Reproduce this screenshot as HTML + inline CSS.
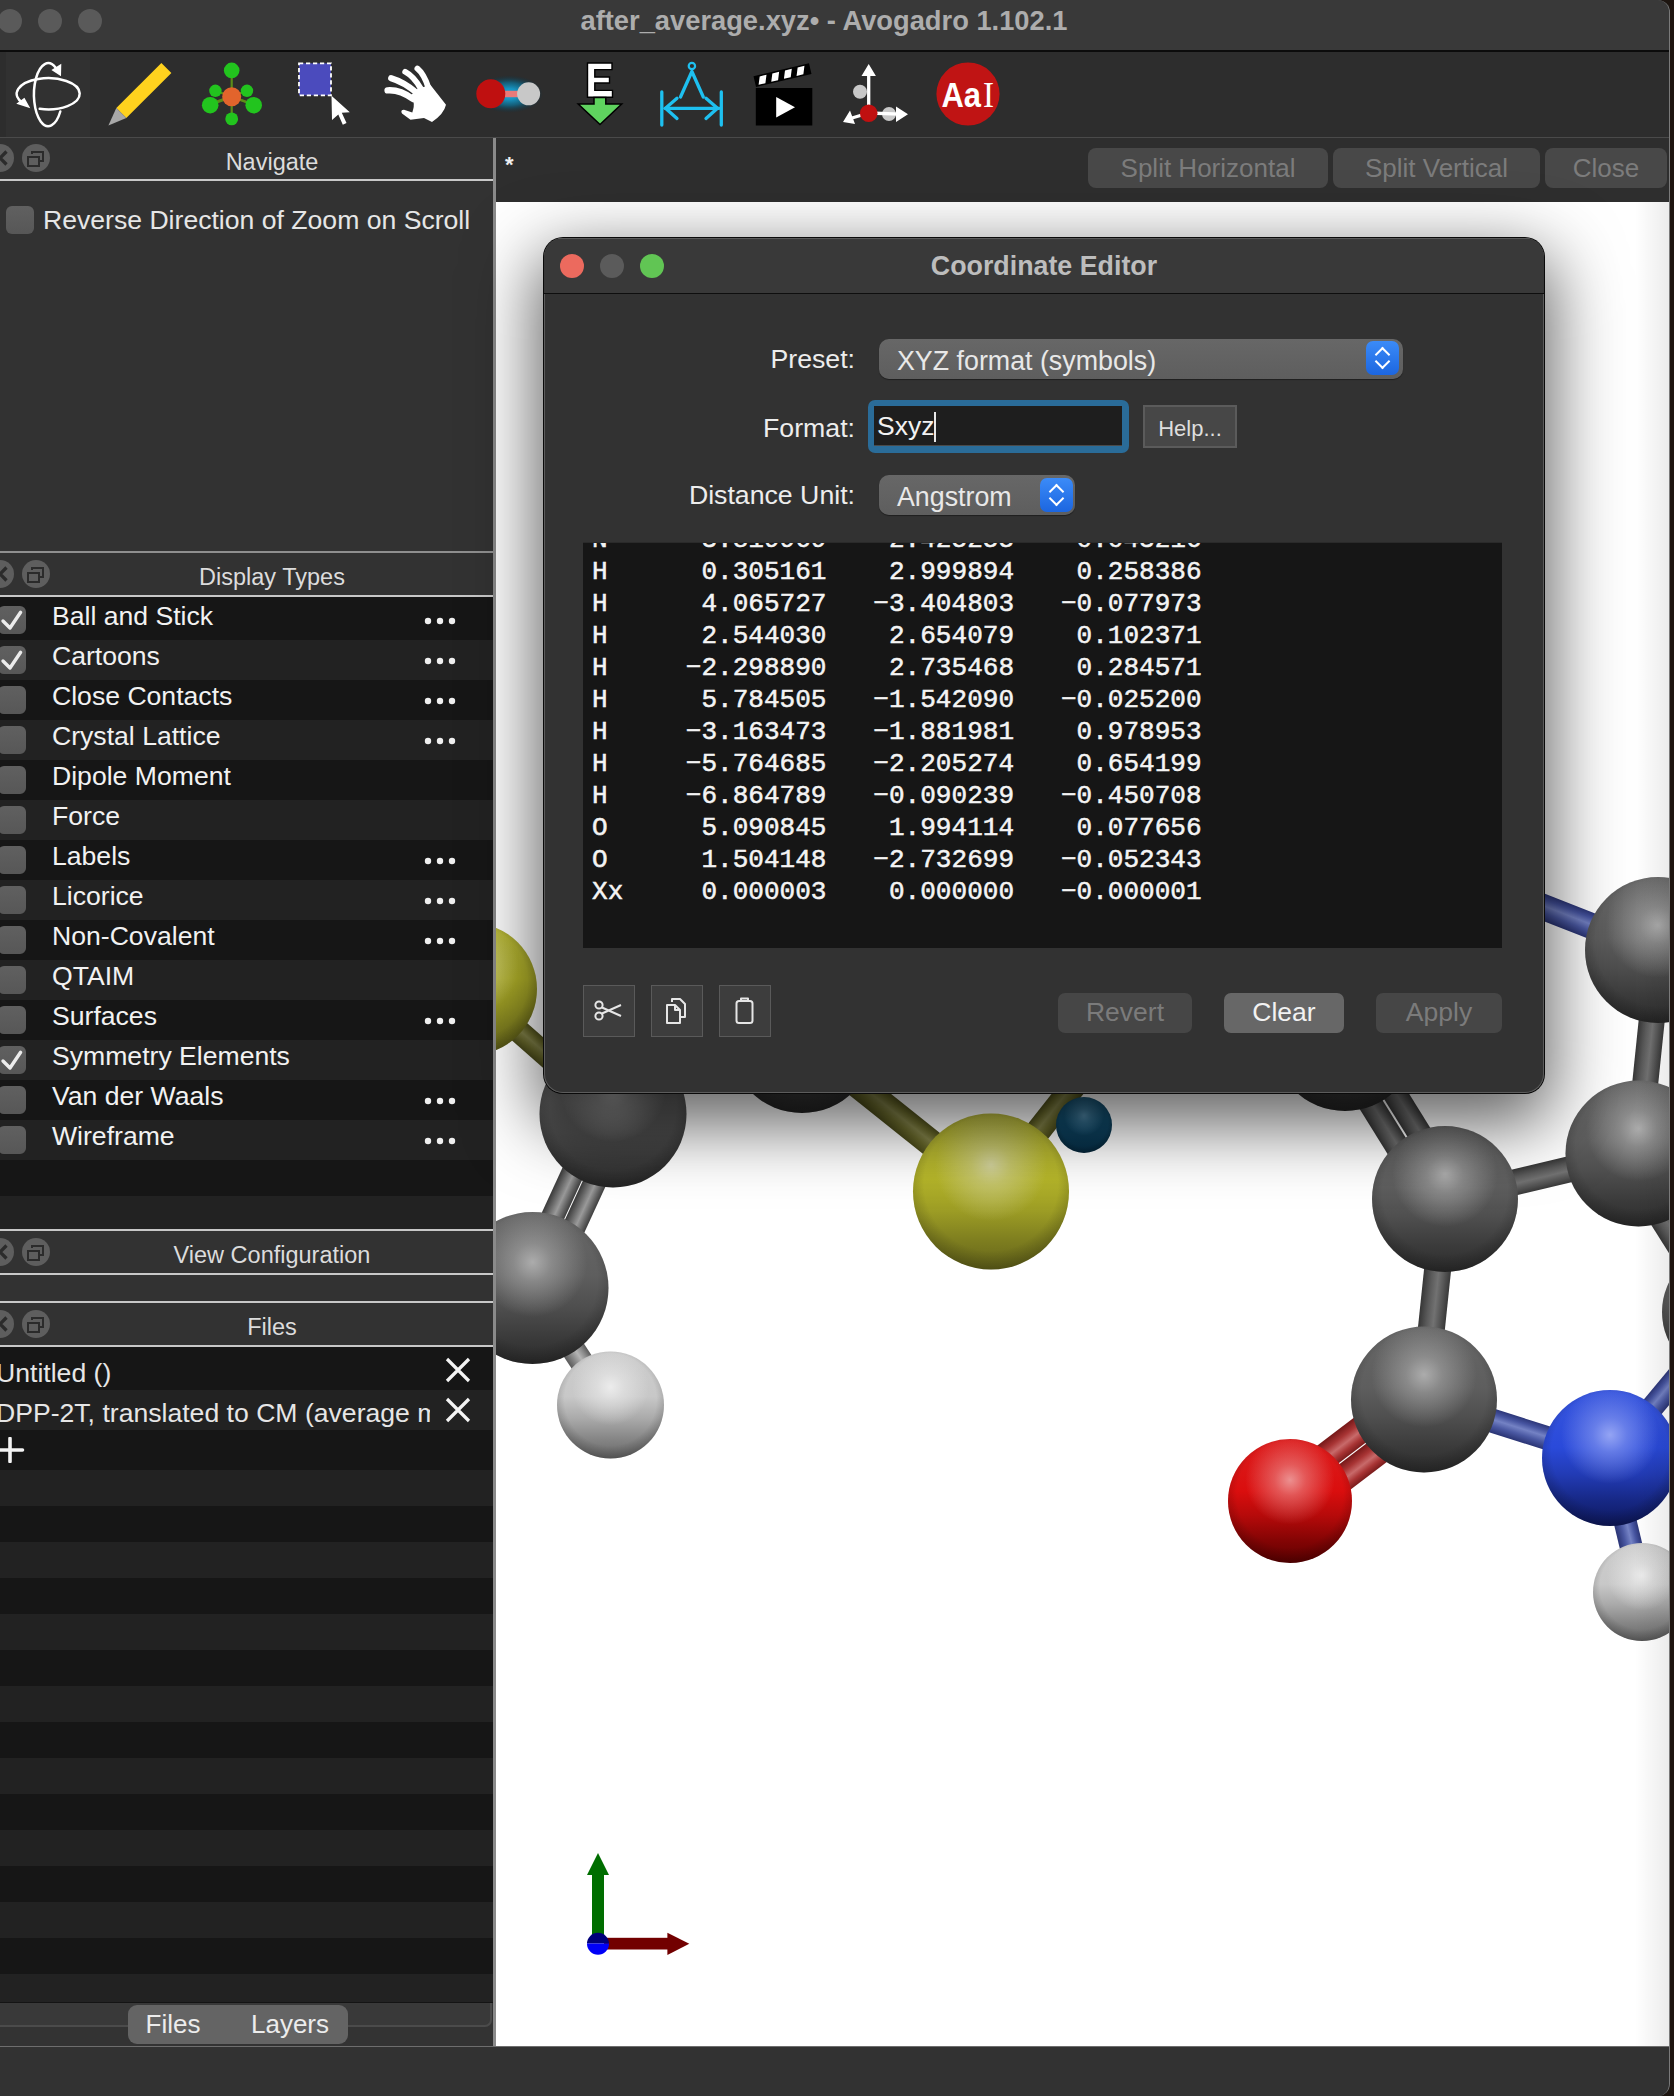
<!DOCTYPE html>
<html><head><meta charset="utf-8">
<style>
*{margin:0;padding:0;box-sizing:border-box}
html,body{width:1674px;height:2096px;overflow:hidden;background:#1d1510;font-family:"Liberation Sans",sans-serif}
.a{position:absolute}
#win{position:absolute;left:0;top:0;width:1670px;height:2096px;background:#303030;overflow:hidden;border-top-right-radius:12px;border-bottom-right-radius:12px}
#title{left:0;top:0;width:1670px;height:50px;background:#393939}
#titletxt{left:0;top:5px;width:1648px;height:32px;line-height:32px;text-align:center;color:#adadad;font-weight:bold;font-size:27.3px}
.tl{width:24px;height:24px;border-radius:50%;background:#5a5a5a;top:9px}
#tbline{left:0;top:50px;width:1670px;height:2px;background:#0c0c0c}
#toolbar{left:0;top:52px;width:1670px;height:85px;background:#2d2d2d}
#tbbot{left:0;top:137px;width:1670px;height:1px;background:#4a4a4a}
#dock{left:0;top:138px;width:493px;height:1908px;background:#323232}
#dockline{left:493px;top:138px;width:3px;height:1908px;background:#8a8a8a}
.hdr{left:50px;width:444px;height:44px;color:#dcdcdc;font-size:23.5px;text-align:center;line-height:48px}
.hline{left:0;width:493px;height:2px;background:#c8c8c8}
.circ{width:28px;height:28px;border-radius:50%;background:#5e5e5e}
.cb{width:28px;height:28px;border-radius:6px;background:linear-gradient(#606060,#575757)}
.row{left:0;width:493px;height:40px}
.rd{background:#161616}.rl{background:#222222}
.rtxt{left:52px;color:#f2f2f2;font-size:26.6px;line-height:40px;white-space:nowrap}
.dots{left:424px;color:#f2f2f2;font-size:26px;line-height:40px}
#tabarea{left:496px;top:138px;width:1174px;height:64px;background:#2e2e2e}
.sbtn{height:40px;top:148px;border-radius:8px;background:#484848;color:#7c7c7c;font-size:26px;text-align:center;line-height:40px}
#view{left:496px;top:202px;width:1174px;height:1844px;background:#ffffff;overflow:hidden}
#status{left:0;top:2046px;width:1670px;height:50px;background:#323232;border-top:1px solid #6e6e6e}

#dlg{left:544px;top:238px;width:1000px;height:855px;border-radius:19px;background:#323232;overflow:hidden;border:none;box-shadow:0 0 0 1px #0a0a0a, inset 0 0 0 1px #5c5c5c, 0 24px 70px 8px rgba(0,0,0,0.62)}
.lbl{left:0;width:311px;text-align:right;color:#ededed;font-size:26.7px;line-height:32px}
.combo{border-radius:10px;background:linear-gradient(#676767,#5e5e5e);box-shadow:0 1px 1px rgba(0,0,0,0.4)}
.combo span{position:absolute;left:18px;top:5.5px;color:#e8e8e8;font-size:26.8px;line-height:32px;white-space:nowrap}
.step{width:33px;height:34px;border-radius:7px;background:linear-gradient(#3b8bf8,#1c66e0)}
.step::before{content:"";position:absolute;left:10px;top:9px;width:9px;height:9px;border-left:2.6px solid #fff;border-top:2.6px solid #fff;transform:rotate(45deg);box-sizing:border-box;width:11px;height:11px;left:11px;top:8px}
.step::after{content:"";position:absolute;border-right:2.6px solid #fff;border-bottom:2.6px solid #fff;transform:rotate(45deg);box-sizing:border-box;width:11px;height:11px;left:11px;top:15px}
.ib{width:52px;height:52px;background:#3d3d3d;border:1.5px solid #5a5a5a}
.ib svg{position:absolute;left:0;top:0}
.pb{top:756px;height:40px;border-radius:7px;background:#474747;color:#f0f0f0;font-size:26.5px;line-height:39px;text-align:center}
.pb.dis{color:#7b7b7b;background:#464646}

</style></head><body>
<div id="win">
 <div id="title" class="a"></div>
 <div id="titletxt" class="a">after_average.xyz&#8226; - Avogadro 1.102.1</div>
 <div class="a tl" style="left:-2px"></div>
 <div class="a tl" style="left:38px"></div>
 <div class="a tl" style="left:78px"></div>
 <div id="tbline" class="a"></div>
 <div id="toolbar" class="a"></div>
 <div id="tbbot" class="a"></div>
 <!--TB--><svg class="a" style="left:0;top:52px" width="1100" height="85" viewBox="0 52 1100 85">
<rect x="6" y="52" width="84" height="85" fill="#313131"/>
<!-- navigate/rotate -->
<g fill="none" stroke="#ffffff" stroke-width="2.5" stroke-linecap="round">
 <path d="M39.7 108.8 A31.5 15.6 0 1 0 22.5 102.8"/>
 <path d="M55.5 67.5 A14.3 31.5 0 1 0 60.3 111.5"/>
</g>
<path d="M61.3 63.8 L61 76.2 L51.4 70 Z M16.3 103.8 L24.4 97.8 L30.3 108.3 Z" fill="#ffffff"/>
<!-- pencil -->
<path d="M161.4 62.9 L171.4 72.9 L126.3 118 L116.3 108 Z" fill="#ffd21e"/>
<path d="M116.3 108 L126.3 118 L108.4 125.6 Z" fill="#a8a8a8"/>
<!-- manipulate atoms -->
<g stroke="#5c8c18" stroke-width="2.2">
 <line x1="231.7" y1="70" x2="231.7" y2="119"/>
 <line x1="215.4" y1="90.8" x2="247" y2="102"/>
 <line x1="247" y1="90.8" x2="215.4" y2="102"/>
 <line x1="210" y1="105" x2="232" y2="97"/>
 <line x1="254" y1="105" x2="232" y2="97"/>
</g>
<g fill="#22c41e">
 <circle cx="231.7" cy="70.4" r="7.8"/><circle cx="215.4" cy="90.8" r="6.2"/><circle cx="247" cy="90.8" r="6.2"/>
 <circle cx="210.2" cy="105.2" r="8.3"/><circle cx="253.7" cy="105.2" r="8.3"/><circle cx="231.7" cy="118.9" r="6.4"/>
</g>
<circle cx="231.7" cy="96.8" r="9.5" fill="#e2642c"/>
<!-- select -->
<rect x="299" y="63.3" width="32" height="32" fill="#4b4bbd" stroke="#ffffff" stroke-width="1.8" stroke-dasharray="4.2 2.8"/>
<path d="M331.5 95.8 L349.8 112.3 L341.8 112.8 L346.5 123 L342.8 124.8 L338.3 114.6 L332 120 Z" fill="#ffffff"/>
<!-- hand -->
<g fill="none" stroke="#ffffff" stroke-linecap="round">
 <path d="M387.6 90.4 Q400 89.5 413 99" stroke-width="6.4"/>
 <path d="M391.2 78.2 Q404 82 417 93" stroke-width="6.2"/>
 <path d="M405.2 71.8 Q414 76.5 421 89" stroke-width="5.8"/>
 <path d="M417.4 68.6 Q424 74 428.5 88" stroke-width="5.8"/>
</g>
<path d="M410 96 L418 88.5 L430.5 85 L446 104.8 Q444 114 432 122 L424 118 L410.5 119.8 L402 113.5 Q400 110 404 109.8 L412.3 112.4 Q414.5 106 413.5 102 Z" fill="#ffffff"/>
<!-- bond centric -->
<defs><radialGradient id="glow" cx="0.5" cy="0.5" r="0.5"><stop offset="0" stop-color="#1ab0e6"/><stop offset="0.3" stop-color="#1790bc"/><stop offset="0.6" stop-color="#126482" stop-opacity="0.9"/><stop offset="1" stop-color="#0c3040" stop-opacity="0"/></radialGradient></defs>
<ellipse cx="509" cy="94" rx="34" ry="19" fill="url(#glow)"/>
<rect x="500" y="90.8" width="22" height="6.4" fill="#e87a7a"/>
<circle cx="490.8" cy="93.8" r="14.5" fill="#bf1010"/>
<circle cx="528.6" cy="93.8" r="11.5" fill="#c8c8c8"/>
<!-- optimize E -->
<path d="M587.5 63 H612 V69.6 H594.8 V77 H609.5 V83 H594.8 V90.4 H612.5 V97.2 H587.5 Z" fill="#ffffff" stroke="#000000" stroke-width="1.4"/>
<path d="M594 97.5 H605.8 V104 H621.7 L600 124.5 L578.2 104 H594 Z" fill="#5fd35f" stroke="#000000" stroke-width="1.5"/>
<!-- measure -->
<g fill="none" stroke="#1ec0f0" stroke-width="3.3" stroke-linecap="round" stroke-linejoin="round">
 <line x1="661.8" y1="92" x2="661.8" y2="125"/><line x1="721.3" y1="92" x2="721.3" y2="125"/>
 <line x1="665" y1="108.3" x2="719" y2="108.3"/>
 <path d="M677 98.2 L665.5 108.3 L677 118.5"/><path d="M706 98.2 L717.5 108.3 L706 118.5"/>
 <path d="M680.5 97 L691.9 71.5 L703.3 97"/>
 <circle cx="691.9" cy="66" r="3.2" stroke-width="2.2"/>
</g>
<!-- clapperboard -->
<rect x="755.8" y="88" width="56.5" height="37.5" fill="#000000"/>
<path d="M776.2 97 L776.2 117.6 L795 107.3 Z" fill="#ffffff"/>
<g transform="translate(753.5 76.3) rotate(-13.3)">
 <rect x="0" y="0" width="57" height="11" fill="#000000"/>
 <path d="M6 1.5 H13 L10 9.5 H3 Z M19 1.5 H26 L23 9.5 H16 Z M32 1.5 H39 L36 9.5 H29 Z M45 1.5 H52 L49 9.5 H42 Z" fill="#ffffff"/>
</g>
<!-- axes / align -->
<circle cx="860" cy="91.8" r="7" fill="#c8c8c8"/>
<circle cx="889" cy="114" r="7" fill="#c8c8c8"/>
<g stroke="#ffffff" stroke-width="3.3" fill="#ffffff">
 <line x1="868.7" y1="113" x2="868.7" y2="72"/>
 <line x1="868.7" y1="113" x2="852" y2="118"/>
 <line x1="868.7" y1="113" x2="900" y2="114.2"/>
</g>
<path d="M861.5 76 L868.7 64 L875.9 76 Z M843 122 L850 110.5 L855 124 Z M896 106.5 L908 114.3 L896 122 Z" fill="#ffffff"/>
<circle cx="868.7" cy="113.3" r="8.8" fill="#c01010"/>
<!-- AaI -->
<circle cx="968" cy="94" r="31.6" fill="#c01414"/>
<text x="941.5" y="107" font-family="Liberation Sans" font-weight="bold" font-size="35.5" fill="#ffffff" textLength="39.5" lengthAdjust="spacingAndGlyphs">Aa</text>
<text x="983" y="107" font-family="Liberation Serif" font-size="36" fill="#ffffff" textLength="11" lengthAdjust="spacingAndGlyphs">I</text>
</svg><!--/TB-->

 <div id="dock" class="a"></div>

 <!-- Navigate -->
 <div class="a circ" style="left:-14px;top:144px"></div>
 <div class="a circ" style="left:22px;top:144px"></div>
 <svg class="a" style="left:-14px;top:144px" width="64" height="28" viewBox="0 0 64 28"><path d="M20.5 7.5L14 14L20.5 20.5" fill="none" stroke="#2b2b2b" stroke-width="3.3"/><rect x="42" y="13" width="11" height="9" fill="none" stroke="#2b2b2b" stroke-width="2"/><path d="M46 10V8H57V17H53" fill="none" stroke="#2b2b2b" stroke-width="2"/></svg>
 <div class="a hdr" style="top:138px">Navigate</div>
 <div class="a hline" style="top:179px"></div>
 <div class="a cb" style="left:6px;top:206px"></div>
 <div class="a rtxt" style="left:43px;top:200px;color:#e6e6e6">Reverse Direction of Zoom on Scroll</div>
 <!-- Display Types -->
 <div class="a" style="left:0;top:551px;width:493px;height:2px;background:#8f8f8f"></div>
 <div class="a circ" style="left:-14px;top:560px"></div>
 <div class="a circ" style="left:22px;top:560px"></div>
 <svg class="a" style="left:-14px;top:560px" width="64" height="28" viewBox="0 0 64 28"><path d="M20.5 7.5L14 14L20.5 20.5" fill="none" stroke="#2b2b2b" stroke-width="3.3"/><rect x="42" y="13" width="11" height="9" fill="none" stroke="#2b2b2b" stroke-width="2"/><path d="M46 10V8H57V17H53" fill="none" stroke="#2b2b2b" stroke-width="2"/></svg>
 <div class="a hdr" style="top:553px">Display Types</div>
 <div class="a hline" style="top:595px"></div>
 <div class="a" style="left:0;top:597px;width:493px;height:2px;background:#0c0c0c"></div>
 <div class="a row rd" style="top:597px;height:43px"></div>
 <div class="a cb" style="left:-2px;top:606px"></div>
 <svg class="a" style="left:0;top:606px" width="26" height="26" viewBox="0 0 26 26"><path d="M3 15 L10 22 L20.6 6.3" fill="none" stroke="#ececec" stroke-width="3.4" stroke-linecap="round" stroke-linejoin="round"/></svg>
 <div class="a rtxt" style="top:596px">Ball and Stick</div>
 <svg class="a" style="left:423px;top:616px" width="34" height="10"><circle cx="5" cy="5" r="3.2" fill="#f0f0f0"/><circle cx="17" cy="5" r="3.2" fill="#f0f0f0"/><circle cx="29" cy="5" r="3.2" fill="#f0f0f0"/></svg>
 <div class="a row rl" style="top:640px;height:40px"></div>
 <div class="a cb" style="left:-2px;top:646px"></div>
 <svg class="a" style="left:0;top:646px" width="26" height="26" viewBox="0 0 26 26"><path d="M3 15 L10 22 L20.6 6.3" fill="none" stroke="#ececec" stroke-width="3.4" stroke-linecap="round" stroke-linejoin="round"/></svg>
 <div class="a rtxt" style="top:636px">Cartoons</div>
 <svg class="a" style="left:423px;top:656px" width="34" height="10"><circle cx="5" cy="5" r="3.2" fill="#f0f0f0"/><circle cx="17" cy="5" r="3.2" fill="#f0f0f0"/><circle cx="29" cy="5" r="3.2" fill="#f0f0f0"/></svg>
 <div class="a row rd" style="top:680px;height:40px"></div>
 <div class="a cb" style="left:-2px;top:686px"></div>
 <div class="a rtxt" style="top:676px">Close Contacts</div>
 <svg class="a" style="left:423px;top:696px" width="34" height="10"><circle cx="5" cy="5" r="3.2" fill="#f0f0f0"/><circle cx="17" cy="5" r="3.2" fill="#f0f0f0"/><circle cx="29" cy="5" r="3.2" fill="#f0f0f0"/></svg>
 <div class="a row rl" style="top:720px;height:40px"></div>
 <div class="a cb" style="left:-2px;top:726px"></div>
 <div class="a rtxt" style="top:716px">Crystal Lattice</div>
 <svg class="a" style="left:423px;top:736px" width="34" height="10"><circle cx="5" cy="5" r="3.2" fill="#f0f0f0"/><circle cx="17" cy="5" r="3.2" fill="#f0f0f0"/><circle cx="29" cy="5" r="3.2" fill="#f0f0f0"/></svg>
 <div class="a row rd" style="top:760px;height:40px"></div>
 <div class="a cb" style="left:-2px;top:766px"></div>
 <div class="a rtxt" style="top:756px">Dipole Moment</div>
 <div class="a row rl" style="top:800px;height:40px"></div>
 <div class="a cb" style="left:-2px;top:806px"></div>
 <div class="a rtxt" style="top:796px">Force</div>
 <div class="a row rd" style="top:840px;height:40px"></div>
 <div class="a cb" style="left:-2px;top:846px"></div>
 <div class="a rtxt" style="top:836px">Labels</div>
 <svg class="a" style="left:423px;top:856px" width="34" height="10"><circle cx="5" cy="5" r="3.2" fill="#f0f0f0"/><circle cx="17" cy="5" r="3.2" fill="#f0f0f0"/><circle cx="29" cy="5" r="3.2" fill="#f0f0f0"/></svg>
 <div class="a row rl" style="top:880px;height:40px"></div>
 <div class="a cb" style="left:-2px;top:886px"></div>
 <div class="a rtxt" style="top:876px">Licorice</div>
 <svg class="a" style="left:423px;top:896px" width="34" height="10"><circle cx="5" cy="5" r="3.2" fill="#f0f0f0"/><circle cx="17" cy="5" r="3.2" fill="#f0f0f0"/><circle cx="29" cy="5" r="3.2" fill="#f0f0f0"/></svg>
 <div class="a row rd" style="top:920px;height:40px"></div>
 <div class="a cb" style="left:-2px;top:926px"></div>
 <div class="a rtxt" style="top:916px">Non-Covalent</div>
 <svg class="a" style="left:423px;top:936px" width="34" height="10"><circle cx="5" cy="5" r="3.2" fill="#f0f0f0"/><circle cx="17" cy="5" r="3.2" fill="#f0f0f0"/><circle cx="29" cy="5" r="3.2" fill="#f0f0f0"/></svg>
 <div class="a row rl" style="top:960px;height:40px"></div>
 <div class="a cb" style="left:-2px;top:966px"></div>
 <div class="a rtxt" style="top:956px">QTAIM</div>
 <div class="a row rd" style="top:1000px;height:40px"></div>
 <div class="a cb" style="left:-2px;top:1006px"></div>
 <div class="a rtxt" style="top:996px">Surfaces</div>
 <svg class="a" style="left:423px;top:1016px" width="34" height="10"><circle cx="5" cy="5" r="3.2" fill="#f0f0f0"/><circle cx="17" cy="5" r="3.2" fill="#f0f0f0"/><circle cx="29" cy="5" r="3.2" fill="#f0f0f0"/></svg>
 <div class="a row rl" style="top:1040px;height:40px"></div>
 <div class="a cb" style="left:-2px;top:1046px"></div>
 <svg class="a" style="left:0;top:1046px" width="26" height="26" viewBox="0 0 26 26"><path d="M3 15 L10 22 L20.6 6.3" fill="none" stroke="#ececec" stroke-width="3.4" stroke-linecap="round" stroke-linejoin="round"/></svg>
 <div class="a rtxt" style="top:1036px">Symmetry Elements</div>
 <div class="a row rd" style="top:1080px;height:40px"></div>
 <div class="a cb" style="left:-2px;top:1086px"></div>
 <div class="a rtxt" style="top:1076px">Van der Waals</div>
 <svg class="a" style="left:423px;top:1096px" width="34" height="10"><circle cx="5" cy="5" r="3.2" fill="#f0f0f0"/><circle cx="17" cy="5" r="3.2" fill="#f0f0f0"/><circle cx="29" cy="5" r="3.2" fill="#f0f0f0"/></svg>
 <div class="a row rl" style="top:1120px;height:40px"></div>
 <div class="a cb" style="left:-2px;top:1126px"></div>
 <div class="a rtxt" style="top:1116px">Wireframe</div>
 <svg class="a" style="left:423px;top:1136px" width="34" height="10"><circle cx="5" cy="5" r="3.2" fill="#f0f0f0"/><circle cx="17" cy="5" r="3.2" fill="#f0f0f0"/><circle cx="29" cy="5" r="3.2" fill="#f0f0f0"/></svg>
 <div class="a row rd" style="top:1160px;height:36px"></div>
 <div class="a row rl" style="top:1196px;height:34px"></div>

 <!-- View Configuration -->
 <div class="a hline" style="top:1229px"></div>
 <div class="a circ" style="left:-14px;top:1238px"></div>
 <div class="a circ" style="left:22px;top:1238px"></div>
 <svg class="a" style="left:-14px;top:1238px" width="64" height="28" viewBox="0 0 64 28"><path d="M20.5 7.5L14 14L20.5 20.5" fill="none" stroke="#2b2b2b" stroke-width="3.3"/><rect x="42" y="13" width="11" height="9" fill="none" stroke="#2b2b2b" stroke-width="2"/><path d="M46 10V8H57V17H53" fill="none" stroke="#2b2b2b" stroke-width="2"/></svg>
 <div class="a hdr" style="top:1231px">View Configuration</div>
 <div class="a hline" style="top:1273px"></div>
 <div class="a hline" style="top:1301px"></div>
 <div class="a circ" style="left:-14px;top:1310px"></div>
 <div class="a circ" style="left:22px;top:1310px"></div>
 <svg class="a" style="left:-14px;top:1310px" width="64" height="28" viewBox="0 0 64 28"><path d="M20.5 7.5L14 14L20.5 20.5" fill="none" stroke="#2b2b2b" stroke-width="3.3"/><rect x="42" y="13" width="11" height="9" fill="none" stroke="#2b2b2b" stroke-width="2"/><path d="M46 10V8H57V17H53" fill="none" stroke="#2b2b2b" stroke-width="2"/></svg>
 <div class="a hdr" style="top:1303px">Files</div>
 <div class="a hline" style="top:1345px"></div>
 <div class="a row rd" style="top:1347px;height:43px"></div>
 <div class="a rtxt" style="left:-4px;top:1353px;color:#e6e6e6">Untitled ()</div>
 <div class="a row rl" style="top:1390px;height:40px"></div>
 <div class="a rtxt" style="left:-4px;top:1393px;color:#e6e6e6;width:434px;overflow:hidden">DPP-2T, translated to CM (average m</div>
 <div class="a row rd" style="top:1430px;height:40px"></div>
 <div class="a row rl" style="top:1470px;height:36px"></div>
 <div class="a row rd" style="top:1506px;height:36px"></div>
 <div class="a row rl" style="top:1542px;height:36px"></div>
 <div class="a row rd" style="top:1578px;height:36px"></div>
 <div class="a row rl" style="top:1614px;height:36px"></div>
 <div class="a row rd" style="top:1650px;height:36px"></div>
 <div class="a row rl" style="top:1686px;height:36px"></div>
 <div class="a row rd" style="top:1722px;height:36px"></div>
 <div class="a row rl" style="top:1758px;height:36px"></div>
 <div class="a row rd" style="top:1794px;height:36px"></div>
 <div class="a row rl" style="top:1830px;height:36px"></div>
 <div class="a row rd" style="top:1866px;height:36px"></div>
 <div class="a row rl" style="top:1902px;height:36px"></div>
 <div class="a row rd" style="top:1938px;height:36px"></div>
 <div class="a row rl" style="top:1974px;height:29px"></div>

 <svg class="a" style="left:444px;top:1356px" width="28" height="28"><path d="M3 3L25 25M25 3L3 25" stroke="#f4f4f4" stroke-width="3.2"/></svg>
 <svg class="a" style="left:444px;top:1396px" width="28" height="28"><path d="M3 3L25 25M25 3L3 25" stroke="#f4f4f4" stroke-width="3.2"/></svg>
 <svg class="a" style="left:0;top:1437px" width="26" height="26"><path d="M10 1.5V24.5M-2 13H22.5" stroke="#f4f4f4" stroke-width="3.6" stroke-linecap="round"/></svg>
 <!-- bottom tabs -->
 <div class="a" style="left:0;top:2003px;width:493px;height:43px;background:#333333"></div>
 <div class="a" style="left:-10px;top:2003px;width:502px;height:24px;background:#393939;border-right:2px solid #4b4b4b;border-bottom:2px solid #4b4b4b;border-bottom-right-radius:7px"></div>
 <div class="a" style="left:0;top:2002px;width:493px;height:1px;background:#141414"></div>
 <div class="a" style="left:128px;top:2005px;width:220px;height:39px;border-radius:9px;background:#646464"></div>
 <div class="a" style="left:128px;top:2005px;width:90px;line-height:39px;text-align:center;color:#ececec;font-size:26px">Files</div>
 <div class="a" style="left:238px;top:2005px;width:104px;line-height:39px;text-align:center;color:#ececec;font-size:26px">Layers</div>
 <div id="dockline" class="a"></div>

 <div id="tabarea" class="a"></div>

 <div class="a" style="left:505px;top:152px;color:#f0f0f0;font-size:22px;font-weight:bold">*</div>
 <div class="a sbtn" style="left:1088px;width:240px">Split Horizontal</div>
 <div class="a sbtn" style="left:1333px;width:207px">Split Vertical</div>
 <div class="a sbtn" style="left:1545px;width:122px">Close</div>
 <div id="view" class="a"></div>
 <!--MOL--><svg class="a" style="left:496px;top:202px" width="1174" height="1844" viewBox="496 202 1174 1844"><defs><linearGradient id="lC" x1="0" y1="0" x2="0" y2="1"><stop offset="0" stop-color="#676767"/><stop offset="0.42" stop-color="#5e5e5e"/><stop offset="0.62" stop-color="#4f4f4f"/><stop offset="0.82" stop-color="#3b3b3b"/><stop offset="1" stop-color="#2c2c2c"/></linearGradient><radialGradient id="hC" cx="0.5" cy="0.33" r="0.36"><stop offset="0" stop-color="#acacac" stop-opacity="1"/><stop offset="0.35" stop-color="#acacac" stop-opacity="0.55"/><stop offset="1" stop-color="#acacac" stop-opacity="0"/></radialGradient><linearGradient id="lCd" x1="0" y1="0" x2="0" y2="1"><stop offset="0" stop-color="#676767"/><stop offset="0.42" stop-color="#5e5e5e"/><stop offset="0.62" stop-color="#4f4f4f"/><stop offset="0.82" stop-color="#3b3b3b"/><stop offset="1" stop-color="#2c2c2c"/></linearGradient><radialGradient id="hCd" cx="0.5" cy="0.33" r="0.36"><stop offset="0" stop-color="#acacac" stop-opacity="1"/><stop offset="0.35" stop-color="#acacac" stop-opacity="0.55"/><stop offset="1" stop-color="#acacac" stop-opacity="0"/></radialGradient><linearGradient id="lH" x1="0" y1="0" x2="0" y2="1"><stop offset="0" stop-color="#cccccc"/><stop offset="0.42" stop-color="#c8c8c8"/><stop offset="0.62" stop-color="#ababab"/><stop offset="0.82" stop-color="#858585"/><stop offset="1" stop-color="#686868"/></linearGradient><radialGradient id="hH" cx="0.5" cy="0.33" r="0.36"><stop offset="0" stop-color="#ececec" stop-opacity="1"/><stop offset="0.35" stop-color="#ececec" stop-opacity="0.55"/><stop offset="1" stop-color="#ececec" stop-opacity="0"/></radialGradient><linearGradient id="lO" x1="0" y1="0" x2="0" y2="1"><stop offset="0" stop-color="#dc1e1e"/><stop offset="0.42" stop-color="#da0e0e"/><stop offset="0.62" stop-color="#b50a0a"/><stop offset="0.82" stop-color="#830404"/><stop offset="1" stop-color="#5e0000"/></linearGradient><radialGradient id="hO" cx="0.5" cy="0.33" r="0.36"><stop offset="0" stop-color="#ec9090" stop-opacity="1"/><stop offset="0.35" stop-color="#ec9090" stop-opacity="0.55"/><stop offset="1" stop-color="#ec9090" stop-opacity="0"/></radialGradient><linearGradient id="lN" x1="0" y1="0" x2="0" y2="1"><stop offset="0" stop-color="#3755dd"/><stop offset="0.42" stop-color="#2a4ada"/><stop offset="0.62" stop-color="#223bb5"/><stop offset="0.82" stop-color="#162783"/><stop offset="1" stop-color="#0e185e"/></linearGradient><radialGradient id="hN" cx="0.5" cy="0.33" r="0.36"><stop offset="0" stop-color="#94a4f4" stop-opacity="1"/><stop offset="0.35" stop-color="#94a4f4" stop-opacity="0.55"/><stop offset="1" stop-color="#94a4f4" stop-opacity="0"/></radialGradient><linearGradient id="lS" x1="0" y1="0" x2="0" y2="1"><stop offset="0" stop-color="#b9b938"/><stop offset="0.42" stop-color="#b6b62a"/><stop offset="0.62" stop-color="#9d9d25"/><stop offset="0.82" stop-color="#7d7d1f"/><stop offset="1" stop-color="#64641a"/></linearGradient><radialGradient id="hS" cx="0.5" cy="0.33" r="0.36"><stop offset="0" stop-color="#d2d29c" stop-opacity="1"/><stop offset="0.35" stop-color="#d2d29c" stop-opacity="0.55"/><stop offset="1" stop-color="#d2d29c" stop-opacity="0"/></radialGradient><linearGradient id="lX" x1="0" y1="0" x2="0" y2="1"><stop offset="0" stop-color="#185373"/><stop offset="0.42" stop-color="#104c6c"/><stop offset="0.62" stop-color="#0d4260"/><stop offset="0.82" stop-color="#093650"/><stop offset="1" stop-color="#062c44"/></linearGradient><radialGradient id="hX" cx="0.5" cy="0.33" r="0.36"><stop offset="0" stop-color="#5088a8" stop-opacity="1"/><stop offset="0.35" stop-color="#5088a8" stop-opacity="0.55"/><stop offset="1" stop-color="#5088a8" stop-opacity="0"/></radialGradient><radialGradient id="edge" cx="0.5" cy="0.45" r="0.55"><stop offset="0.78" stop-color="#000" stop-opacity="0"/><stop offset="1" stop-color="#000" stop-opacity="0.22"/></radialGradient><linearGradient id="bC" x1="0" y1="0" x2="0" y2="1"><stop offset="0" stop-color="#383838"/><stop offset="0.22" stop-color="#555555"/><stop offset="0.45" stop-color="#727272"/><stop offset="0.7" stop-color="#5a5a5a"/><stop offset="1" stop-color="#363636"/></linearGradient><linearGradient id="bS" x1="0" y1="0" x2="0" y2="1"><stop offset="0" stop-color="#4e4e1c"/><stop offset="0.22" stop-color="#6a6a2c"/><stop offset="0.45" stop-color="#84844a"/><stop offset="0.7" stop-color="#6a6a2c"/><stop offset="1" stop-color="#4a4a1a"/></linearGradient><linearGradient id="bB" x1="0" y1="0" x2="0" y2="1"><stop offset="0" stop-color="#2c3678"/><stop offset="0.22" stop-color="#4654a0"/><stop offset="0.45" stop-color="#7482c4"/><stop offset="0.7" stop-color="#4a58a2"/><stop offset="1" stop-color="#2a3474"/></linearGradient><linearGradient id="bR" x1="0" y1="0" x2="0" y2="1"><stop offset="0" stop-color="#7a1c1c"/><stop offset="0.22" stop-color="#a83434"/><stop offset="0.45" stop-color="#c86a6a"/><stop offset="0.7" stop-color="#a83434"/><stop offset="1" stop-color="#761818"/></linearGradient><linearGradient id="bH" x1="0" y1="0" x2="0" y2="1"><stop offset="0" stop-color="#5a5a5a"/><stop offset="0.22" stop-color="#8a8a8a"/><stop offset="0.45" stop-color="#b4b4b4"/><stop offset="0.7" stop-color="#8a8a8a"/><stop offset="1" stop-color="#5a5a5a"/></linearGradient><linearGradient id="bCL" x1="0" y1="0" x2="0" y2="1"><stop offset="0" stop-color="#3e3e3e"/><stop offset="0.22" stop-color="#6a6a6a"/><stop offset="0.45" stop-color="#9a9a9a"/><stop offset="0.7" stop-color="#6e6e6e"/><stop offset="1" stop-color="#3a3a3a"/></linearGradient></defs><rect x="0" y="-13.0" width="150.4" height="26" fill="url(#bB)" transform="translate(1500,890) rotate(21.45)"/>
<rect x="0" y="-13.0" width="204.1" height="26" fill="url(#bC)" transform="translate(1659,950) rotate(95.91)"/>
<rect x="0" y="-13.0" width="198.4" height="26" fill="url(#bC)" transform="translate(1638,1153) rotate(166.59)"/>
<rect x="0" y="-13.5" width="191.4" height="27" fill="url(#bC)" transform="translate(1620,1150) rotate(57.80)"/>
<rect x="0" y="-12.0" width="189.5" height="24" fill="url(#bC)" transform="translate(1356.0432020726798,1031.1408682778385) rotate(58.15)"/><rect x="0" y="-12.0" width="189.5" height="24" fill="url(#bC)" transform="translate(1333.9567979273202,1044.8591317221615) rotate(58.15)"/>
<rect x="0" y="-13.5" width="201.1" height="27" fill="url(#bC)" transform="translate(1445,1199) rotate(95.99)"/>
<rect x="0" y="-13.5" width="168.4" height="27" fill="url(#bR)" transform="translate(1432.4795946891988,1410.1398596897318) rotate(142.72)"/><rect x="0" y="-13.5" width="168.4" height="27" fill="url(#bR)" transform="translate(1415.5204053108012,1387.8601403102682) rotate(142.72)"/>
<rect x="0" y="-12.0" width="195.1" height="24" fill="url(#bB)" transform="translate(1424,1399) rotate(17.60)"/>
<rect x="0" y="-11.5" width="137.8" height="23" fill="url(#bB)" transform="translate(1610,1458) rotate(76.57)"/>
<rect x="0" y="-11.5" width="140.6" height="23" fill="url(#bB)" transform="translate(1610,1458) rotate(-50.19)"/>
<rect x="0" y="-13.5" width="241.9" height="27" fill="url(#bS)" transform="translate(802,1040) rotate(38.62)"/>
<rect x="0" y="-12.5" width="192.3" height="25" fill="url(#bS)" transform="translate(991,1191) rotate(-51.76)"/>
<rect x="0" y="-11.5" width="189.2" height="23" fill="url(#bS)" transform="translate(471,989) rotate(41.36)"/>
<rect x="0" y="-11.5" width="191.5" height="23" fill="url(#bCL)" transform="translate(623.9028368235801,1119.012798539577) rotate(114.69)"/><rect x="0" y="-11.5" width="191.5" height="23" fill="url(#bCL)" transform="translate(602.0971631764199,1108.987201460423) rotate(114.69)"/>
<rect x="0" y="-12.0" width="140.1" height="24" fill="url(#bH)" transform="translate(533,1288) rotate(56.65)"/>
<rect x="0" y="-11.0" width="143.4" height="22" fill="url(#bC)" transform="translate(613,1114) rotate(-52.65)"/>
<g><circle cx="1345" cy="1038" r="73" fill="url(#lCd)"/><circle cx="1345" cy="1038" r="73" fill="url(#hCd)"/><circle cx="1345" cy="1038" r="73" fill="url(#edge)"/></g>
<g><circle cx="802" cy="1040" r="73" fill="url(#lCd)"/><circle cx="802" cy="1040" r="73" fill="url(#hCd)"/><circle cx="802" cy="1040" r="73" fill="url(#edge)"/></g>
<g><circle cx="1658" cy="950" r="73" fill="url(#lC)"/><circle cx="1658" cy="950" r="73" fill="url(#hC)"/><circle cx="1658" cy="950" r="73" fill="url(#edge)"/></g>
<g><circle cx="1638.5" cy="1153.5" r="73" fill="url(#lC)"/><circle cx="1638.5" cy="1153.5" r="73" fill="url(#hC)"/><circle cx="1638.5" cy="1153.5" r="73" fill="url(#edge)"/></g>
<g><circle cx="1728" cy="1312" r="66" fill="url(#lC)"/><circle cx="1728" cy="1312" r="66" fill="url(#hC)"/><circle cx="1728" cy="1312" r="66" fill="url(#edge)"/></g>
<g><circle cx="1445" cy="1199" r="73" fill="url(#lC)"/><circle cx="1445" cy="1199" r="73" fill="url(#hC)"/><circle cx="1445" cy="1199" r="73" fill="url(#edge)"/></g>
<g><circle cx="1424" cy="1399.5" r="73" fill="url(#lC)"/><circle cx="1424" cy="1399.5" r="73" fill="url(#hC)"/><circle cx="1424" cy="1399.5" r="73" fill="url(#edge)"/></g>
<g><circle cx="1290" cy="1501" r="62" fill="url(#lO)"/><circle cx="1290" cy="1501" r="62" fill="url(#hO)"/><circle cx="1290" cy="1501" r="62" fill="url(#edge)"/></g>
<g><circle cx="1610" cy="1458" r="68" fill="url(#lN)"/><circle cx="1610" cy="1458" r="68" fill="url(#hN)"/><circle cx="1610" cy="1458" r="68" fill="url(#edge)"/></g>
<g><circle cx="1642" cy="1592" r="49" fill="url(#lH)"/><circle cx="1642" cy="1592" r="49" fill="url(#hH)"/><circle cx="1642" cy="1592" r="49" fill="url(#edge)"/></g>
<g><circle cx="991" cy="1191.5" r="78" fill="url(#lS)"/><circle cx="991" cy="1191.5" r="78" fill="url(#hS)"/><circle cx="991" cy="1191.5" r="78" fill="url(#edge)"/></g>
<g><circle cx="1084" cy="1125" r="28" fill="url(#lX)"/><circle cx="1084" cy="1125" r="28" fill="url(#hX)"/><circle cx="1084" cy="1125" r="28" fill="url(#edge)"/></g>
<g><circle cx="471" cy="989" r="66" fill="url(#lS)"/><circle cx="471" cy="989" r="66" fill="url(#hS)"/><circle cx="471" cy="989" r="66" fill="url(#edge)"/></g>
<g><circle cx="613" cy="1114" r="73.5" fill="url(#lC)"/><circle cx="613" cy="1114" r="73.5" fill="url(#hC)"/><circle cx="613" cy="1114" r="73.5" fill="url(#edge)"/></g>
<g><circle cx="532.5" cy="1288" r="76" fill="url(#lC)"/><circle cx="532.5" cy="1288" r="76" fill="url(#hC)"/><circle cx="532.5" cy="1288" r="76" fill="url(#edge)"/></g>
<g><circle cx="610.5" cy="1405" r="53.5" fill="url(#lH)"/><circle cx="610.5" cy="1405" r="53.5" fill="url(#hH)"/><circle cx="610.5" cy="1405" r="53.5" fill="url(#edge)"/></g>
<rect x="592" y="1874" width="12" height="62" fill="#006e00"/>
<path d="M587 1875 L598 1853 L609 1875 Z" fill="#006e00"/>
<rect x="604" y="1937.8" width="64" height="11.7" fill="#720000"/>
<path d="M667.4 1932.8 L689.3 1943.7 L667.4 1955 Z" fill="#720000"/>
<clipPath id="ballclip"><circle cx="598" cy="1943.7" r="11"/></clipPath>
<g clip-path="url(#ballclip)"><rect x="586" y="1932" width="24" height="11.5" fill="#00007a"/><rect x="586" y="1943.5" width="24" height="12" fill="#0000f8"/></g>
</svg><!--/MOL-->
 <div class="a" style="left:1635px;top:202px;width:35px;height:1844px;background:linear-gradient(to right,rgba(0,0,0,0),rgba(0,0,0,0.08))"></div>
 <div id="status" class="a"></div>
 <div class="a" style="left:0;top:0;width:1670px;height:2096px;border-right:1.5px solid #7a7a7a;border-top-right-radius:12px;border-bottom-right-radius:12px;pointer-events:none"></div>
</div>

<div id="dlg" class="a">
<div class="a" style="left:0;top:-1px;width:1000px;height:856px">
 <div class="a" style="left:0;top:0;width:1000px;height:57px;background:#393939;border-bottom:1.5px solid #0e0e0e"></div>
 <div class="a" style="left:16px;top:17px;width:24px;height:24px;border-radius:50%;background:#ec6a5e"></div>
 <div class="a" style="left:56px;top:17px;width:24px;height:24px;border-radius:50%;background:#5b5b5b"></div>
 <div class="a" style="left:96px;top:17px;width:24px;height:24px;border-radius:50%;background:#61c554"></div>
 <div class="a" style="left:0;top:12.5px;width:1000px;text-align:center;color:#bdbdbd;font-weight:bold;font-size:26.8px;line-height:32px">Coordinate Editor</div>
 <div class="a lbl" style="top:106px">Preset:</div>
 <div class="a lbl" style="top:175px">Format:</div>
 <div class="a lbl" style="top:242px">Distance Unit:</div>
 <div class="a combo" style="left:335px;top:102px;width:524px;height:40px"><span>XYZ format (symbols)</span></div>
 <div class="a step" style="left:822px;top:104px"></div>
 <div class="a" style="left:324px;top:163px;width:261px;height:53px;border-radius:7px;background:#2a6c99"></div>
 <div class="a" style="left:330px;top:169px;width:248px;height:40px;background:#1e1e1e;border-bottom:1.5px solid #4a4a4a"></div>
 <div class="a" style="left:333px;top:173px;color:#f2f2f2;font-size:26.5px;line-height:32px">Sxyz</div>
 <div class="a" style="left:390px;top:175px;width:2px;height:30px;background:#e8e8e8"></div>
 <div class="a" style="left:599px;top:168px;width:94px;height:43px;background:#474747;border:2px solid #5b5b5b;color:#dedede;font-size:22px;line-height:43px;text-align:center">Help...</div>
 <div class="a combo" style="left:335px;top:238px;width:196px;height:40px"><span>Angstrom</span></div>
 <div class="a step" style="left:496px;top:241px"></div>
 <div class="a" style="left:39px;top:305px;width:919px;height:406px;background:#161616;border-top:1px solid #2a2a2a;overflow:hidden">
  <pre class="a" style="left:9px;top:-19px;margin:0;font-family:'Liberation Mono',monospace;font-size:26.05px;-webkit-text-stroke:0.5px #f4f4f4;line-height:32px;color:#f4f4f4">N      3.819969    2.425255    0.043216
H      0.305161    2.999894    0.258386
H      4.065727   −3.404803   −0.077973
H      2.544030    2.654079    0.102371
H     −2.298890    2.735468    0.284571
H      5.784505   −1.542090   −0.025200
H     −3.163473   −1.881981    0.978953
H     −5.764685   −2.205274    0.654199
H     −6.864789   −0.090239   −0.450708
O      5.090845    1.994114    0.077656
O      1.504148   −2.732699   −0.052343
Xx     0.000003    0.000000   −0.000001</pre>
 </div>
 <div class="a ib" style="left:39px;top:748px"><svg width="49" height="49" viewBox="0 0 49 49"><g fill="none" stroke="#e6e6e6" stroke-width="2"><circle cx="15" cy="19" r="3.6"/><circle cx="15" cy="30" r="3.6"/><path d="M18 21.5L37 30M18 27.5L37 19"/></g></svg></div>
 <div class="a ib" style="left:107px;top:748px"><svg width="49" height="49" viewBox="0 0 49 49"><g fill="none" stroke="#e6e6e6" stroke-width="2" stroke-linejoin="round"><path d="M20 16V13H28L33 18V31H29"/><path d="M15 19H23L28 24V37H15Z"/><path d="M23 19V24H28"/></g></svg></div>
 <div class="a ib" style="left:175px;top:748px"><svg width="49" height="49" viewBox="0 0 49 49"><g fill="none" stroke="#e6e6e6" stroke-width="2" stroke-linejoin="round"><rect x="16.5" y="15" width="16" height="22" rx="2.5"/><path d="M21 15V12.5H28V15"/></g></svg></div>
 <div class="a pb dis" style="left:514px;top:756px;width:134px">Revert</div>
 <div class="a pb" style="left:680px;top:756px;width:120px;background:#676767;color:#f2f2f2">Clear</div>
 <div class="a pb dis" style="left:832px;top:756px;width:126px">Apply</div>
</div>
 <div class="a" style="left:0;top:0;width:1000px;height:1px;background:#5a5a5a"></div>
</div>

</body></html>
